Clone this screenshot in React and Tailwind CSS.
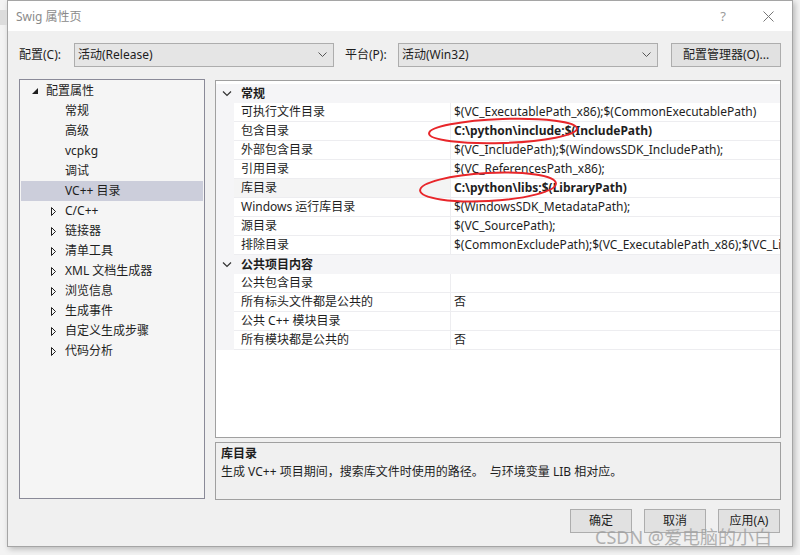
import React from "react";

const font = { fontFamily: '"Noto Sans", "Noto Sans CJK SC", sans-serif' };

function Combo({ text, w }) {
  return (
    <div className={`flex h-[24px] ${w} items-center justify-between border border-[#adadad] bg-[#e5e5e5] pl-[3px] pr-[6px]`}>
      <span className="text-[12px] text-[#1e1e1e]">{text}</span>
      <svg width="9" height="6" viewBox="0 0 9 6"><path d="M0.5 0.5 L4.5 4.5 L8.5 0.5" fill="none" stroke="#555" strokeWidth="1" /></svg>
    </div>
  );
}

function Btn({ children, w = "w-[62px]" }) {
  return (
    <div className={`flex h-[24px] ${w} items-center justify-center border border-[#adadad] bg-[#e1e1e1] text-[12px] text-[#1e1e1e]`}>
      {children}
    </div>
  );
}

const treeItems = [
  { t: "配置属性", kind: "root" },
  { t: "常规", kind: "leaf" },
  { t: "高级", kind: "leaf" },
  { t: "vcpkg", kind: "leaf" },
  { t: "调试", kind: "leaf" },
  { t: "VC++ 目录", kind: "leaf", sel: true },
  { t: "C/C++", kind: "node" },
  { t: "链接器", kind: "node" },
  { t: "清单工具", kind: "node" },
  { t: "XML 文档生成器", kind: "node" },
  { t: "浏览信息", kind: "node" },
  { t: "生成事件", kind: "node" },
  { t: "自定义生成步骤", kind: "node" },
  { t: "代码分析", kind: "node" },
];

function TreeRow({ item }) {
  return (
    <div className={`mx-[1px] flex h-[20px] items-center text-[12px] text-[#1e1e1e] ${item.sel ? "bg-[#cccedb]" : ""}`}>
      {item.kind === "root" && (
        <>
          <svg className="ml-[11px]" width="6" height="6" viewBox="0 0 6 6"><path d="M6 0 L6 6 L0 6 Z" fill="#1e1e1e" /></svg>
          <span className="ml-[8px]">{item.t}</span>
        </>
      )}
      {item.kind === "leaf" && <span className="ml-[44px]">{item.t}</span>}
      {item.kind === "node" && (
        <>
          <svg className="ml-[30px]" width="5" height="9" viewBox="0 0 5 9"><path d="M0.5 0.5 L4.5 4.5 L0.5 8.5 Z" fill="none" stroke="#1e1e1e" strokeWidth="1" /></svg>
          <span className="ml-[9px]">{item.t}</span>
        </>
      )}
    </div>
  );
}

function CatRow({ t }) {
  return (
    <div className="flex h-[19px] items-center bg-[#f5f5f7] text-[12px]">
      <svg className="ml-[6px]" width="10" height="6" viewBox="0 0 10 6"><path d="M1 0.5 L5 4.5 L9 0.5" fill="none" stroke="#333" strokeWidth="1.2" /></svg>
      <span className="ml-[9px] font-bold text-[#1e1e1e]">{t}</span>
    </div>
  );
}

function PropRow({ name, value, bold, sel }) {
  return (
    <div className="flex h-[19px] text-[12px] text-[#1e1e1e]">
      <div className="w-[18px] shrink-0 bg-[#f5f5f7]" />
      <div className={`flex w-[217px] shrink-0 items-center border-b border-r border-[#ededf0] pl-[7px] ${sel ? "bg-[#f4f4f4]" : "bg-white"}`}>
        <span className="whitespace-nowrap">{name}</span>
      </div>
      <div className="flex min-w-0 flex-1 items-center overflow-hidden border-b border-[#ededf0] bg-white pl-[3px]">
        <span className={`whitespace-nowrap ${bold ? "font-bold" : ""}`}>{value}</span>
      </div>
    </div>
  );
}

export default function App() {
  return (
    <div className="relative h-[555px] w-[800px] overflow-hidden bg-[#f3f3f3]" style={font}>
      <div className="absolute left-0 top-[10px] h-[15px] w-[7px] bg-[#dcdcdc]" />
      <div className="ml-[7px] flex h-[547px] w-[786px] flex-col border border-[#a5a5a5] bg-[#f0f0f0] shadow-[2px_2px_6px_rgba(0,0,0,0.25)]">
        {/* title bar */}
        <div className="flex h-[30px] shrink-0 items-center bg-white pt-[1px]">
          <span className="ml-[8px] text-[12px] text-[#8a8a8a]">Swig 属性页</span>
          <span className="ml-auto text-[13px] text-[#9a9a9a]">?</span>
          <svg className="ml-[37px] mr-[18px]" width="11" height="11" viewBox="0 0 11 11"><path d="M0.5 0.5 L10.5 10.5 M10.5 0.5 L0.5 10.5" stroke="#777" strokeWidth="1" /></svg>
        </div>

        <div className="flex min-w-0 flex-1 flex-col px-[11px]">
          {/* config row */}
          <div className="mt-[12px] flex items-center">
            <span className="w-[55px] text-[12px] text-[#1e1e1e]">配置(C):</span>
            <Combo text="活动(Release)" w="w-[260px]" />
            <span className="ml-[11px] w-[53px] text-[12px] text-[#1e1e1e]">平台(P):</span>
            <Combo text="活动(Win32)" w="w-[260px]" />
            <div className="ml-[13px]">
              <Btn w="w-[110px]">配置管理器(O)...</Btn>
            </div>
          </div>

          {/* main */}
          <div className="mt-[12px] flex h-[421px] min-w-0">
            <div className="h-[420px] w-[186px] shrink-0 border border-[#8a8a98] bg-[#f5f5f5] pt-[1px]">
              {treeItems.map((it, i) => (
                <TreeRow key={i} item={it} />
              ))}
            </div>
            <div className="ml-[10px] flex min-w-0 flex-1 flex-col">
              <div className="mt-[1px] h-[358px] min-w-0 overflow-hidden border border-[#a0a0a0] bg-white pt-[3px]">
                <CatRow t="常规" />
                <PropRow name="可执行文件目录" value="$(VC_ExecutablePath_x86);$(CommonExecutablePath)" />
                <PropRow name="包含目录" value="C:\python\include;$(IncludePath)" bold />
                <PropRow name="外部包含目录" value="$(VC_IncludePath);$(WindowsSDK_IncludePath);" />
                <PropRow name="引用目录" value="$(VC_ReferencesPath_x86);" />
                <PropRow name="库目录" value="C:\python\libs;$(LibraryPath)" bold sel />
                <PropRow name="Windows 运行库目录" value="$(WindowsSDK_MetadataPath);" />
                <PropRow name="源目录" value="$(VC_SourcePath);" />
                <PropRow name="排除目录" value="$(CommonExcludePath);$(VC_ExecutablePath_x86);$(VC_LibraryPath_x86)" />
                <CatRow t="公共项目内容" />
                <PropRow name="公共包含目录" value="" />
                <PropRow name="所有标头文件都是公共的" value="否" />
                <PropRow name="公共 C++ 模块目录" value="" />
                <PropRow name="所有模块都是公共的" value="否" />
              </div>
              <div className="mt-[4px] h-[58px] border border-[#a0a0a0] bg-[#f0f0f0] px-[5px] pt-[2px] text-[12px] text-[#1e1e1e]">
                <div className="font-bold leading-[18px]">库目录</div>
                <div className="leading-[18px]">生成 VC++ 项目期间，搜索库文件时使用的路径。&nbsp;&nbsp;与环境变量 LIB 相对应。</div>
              </div>
            </div>
          </div>

          {/* buttons */}
          <div className="mt-[9px] flex justify-end gap-[12px] pr-[1px]">
            <Btn>确定</Btn>
            <Btn>取消</Btn>
            <Btn>应用(A)</Btn>
          </div>
        </div>
      </div>

      {/* annotations */}
      <svg className="pointer-events-none absolute left-0 top-0" width="800" height="555">
        <ellipse cx="503" cy="131" rx="74" ry="12" fill="none" stroke="#e8262a" strokeWidth="2" transform="rotate(-2 503 131)" />
        <ellipse cx="488" cy="187" rx="68" ry="14" fill="none" stroke="#e8262a" strokeWidth="2" transform="rotate(-3 488 187)" />
      </svg>
      <div className="pointer-events-none absolute left-[595px] top-[526px] text-[18px] leading-[22px] text-[#a0a0a0] opacity-80">
        CSDN @爱电脑的小白
      </div>
    </div>
  );
}
